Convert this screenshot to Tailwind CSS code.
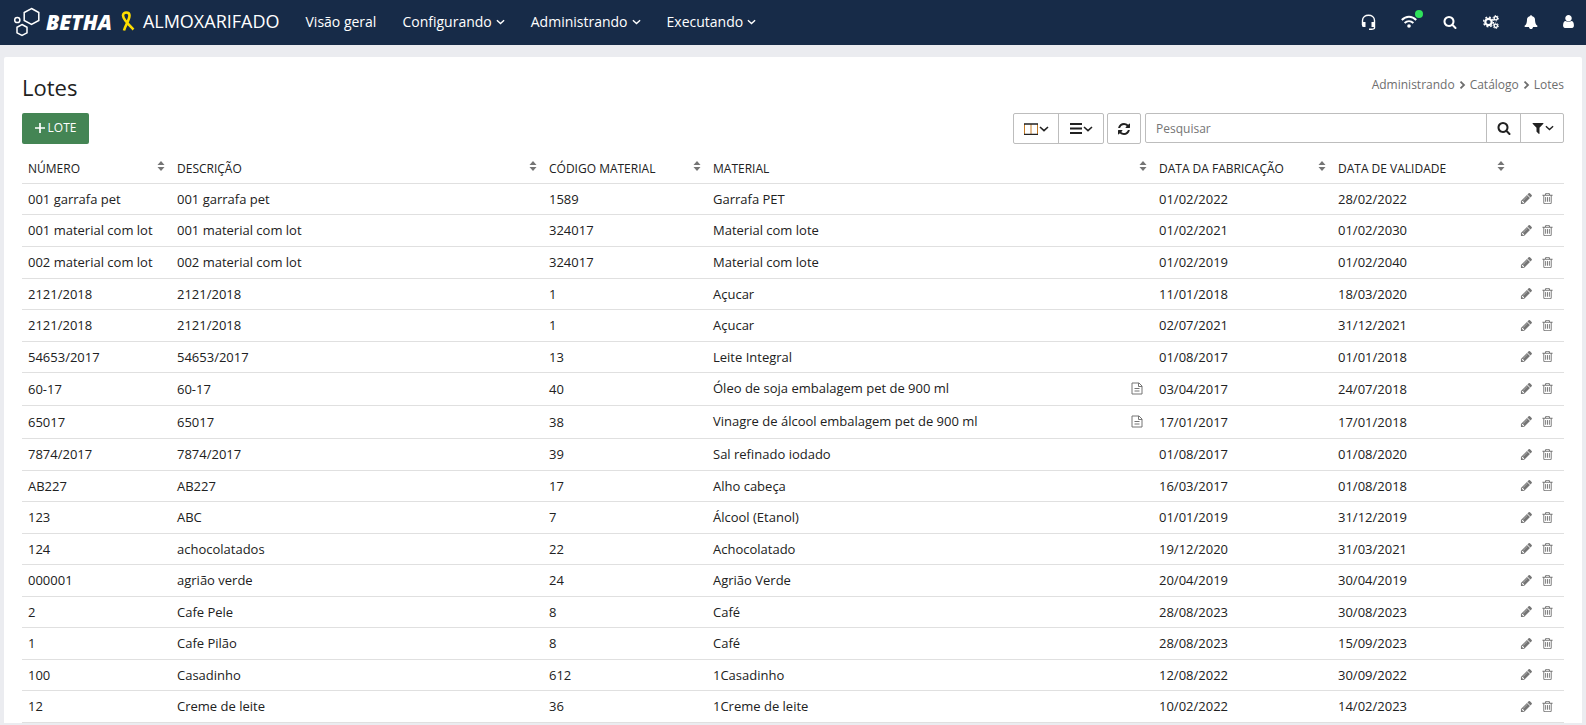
<!DOCTYPE html>
<html lang="pt-BR">
<head>
<meta charset="utf-8">
<meta name="viewport" content="width=device-width, initial-scale=1">
<title>Almoxarifado - Lotes</title>
<script src="https://cdn.jsdelivr.net/npm/@tailwindcss/browser@4"></script>
</head>
<body class="min-h-screen overflow-x-hidden bg-[#ebecf0] font-['Open_Sans',sans-serif] text-[13px] text-[#212121]">
<svg class="hidden" aria-hidden="true">
  <symbol id="search" viewBox="0 0 1792 1792"><path d="M1216 832q0-185-131.500-316.500t-316.500-131.500-316.500 131.500-131.500 316.500 131.500 316.500 316.500 131.500 316.500-131.500 131.500-316.500zm512 832q0 52-38 90t-90 38q-54 0-90-38l-343-342q-179 124-399 124-143 0-273.500-55.500t-225-150-150-225-55.500-273.500 55.500-273.500 150-225 225-150 273.500-55.500 273.500 55.500 225 150 150 225 55.500 273.500q0 220-124 399l343 343q37 37 37 90z"/></symbol>
  <symbol id="filter" viewBox="0 0 1792 1792"><path d="M1595 295q17 41-14 70l-493 493v742q0 42-39 59-13 5-25 5-27 0-45-19l-256-256q-19-19-19-45v-486l-493-493q-31-29-14-70 17-39 59-39h1280q42 0 59 39z"/></symbol>
  <symbol id="refresh" viewBox="0 0 1792 1792"><path d="M1639 1056q0 5-1 7-64 268-268 434.500t-478 166.500q-146 0-282.500-55t-243.500-157l-129 129q-19 19-45 19t-45-19-19-45v-448q0-26 19-45t45-19h448q26 0 45 19t19 45-19 45l-137 137q71 66 161 102t187 36q134 0 250-65t186-179q11-17 53-117 8-23 30-23h192q13 0 22.500 9.500t9.500 22.500zm25-800v448q0 26-19 45t-45 19h-448q-26 0-45-19t-19-45 19-45l138-138q-148-137-349-137-134 0-250 65t-186 179q-11 17-53 117-8 23-30 23h-199q-13 0-22.500-9.500t-9.500-22.500v-7q65-268 270-434.500t480-166.500q146 0 284 55.500t245 156.500l130-129q19-19 45-19t45 19 19 45z"/></symbol>
  <symbol id="pencil" viewBox="0 0 1792 1792"><path d="M491 1536l91-91-235-235-91 91v107h128v128h107zm523-928q0-22-22-22-10 0-17 7l-542 542q-7 7-7 17 0 22 22 22 10 0 17-7l542-542q7-7 7-17zm-54-192l416 416-832 832h-416v-416zm683 96q0 53-37 90l-166 166-416-416 166-165q36-38 90-38 53 0 91 38l235 234q37 39 37 91z"/></symbol>
  <symbol id="trash" viewBox="0 0 1792 1792"><path d="M704 736v576q0 14-9 23t-23 9h-64q-14 0-23-9t-9-23v-576q0-14 9-23t23-9h64q14 0 23 9t9 23zm256 0v576q0 14-9 23t-23 9h-64q-14 0-23-9t-9-23v-576q0-14 9-23t23-9h64q14 0 23 9t9 23zm256 0v576q0 14-9 23t-23 9h-64q-14 0-23-9t-9-23v-576q0-14 9-23t23-9h64q14 0 23 9t9 23zm128 724v-948h-896v948q0 22 7 40.500t14.500 27 10.500 8.500h832q3 0 10.500-8.500t14.500-27 7-40.500zm-672-1076h448l-48-117q-7-9-17-11h-317q-10 2-17 11zm928 32v64q0 14-9 23t-23 9h-96v948q0 83-47 143.500t-113 60.500h-832q-66 0-113-58.500t-47-141.500v-952h-96q-14 0-23-9t-9-23v-64q0-14 9-23t23-9h309l70-167q15-37 54-63t79-26h320q40 0 79 26t54 63l70 167h309q14 0 23 9t9 23z"/></symbol>
  <symbol id="bell" viewBox="0 0 1792 1792"><path d="M1728 1408q0 52-38 90t-90 38h-448q0 106-75 181t-181 75-181-75-75-181h-448q-52 0-90-38t-38-90q50-42 91-88t85-119.500 74.500-158.500 50-206 19.500-260q0-152 117-282.500t307-158.500q-8-19-8-39 0-40 28-68t68-28 68 28 28 68q0 20-8 39 190 28 307 158.500t117 282.500q0 139 19.500 260t50 206 74.500 158.500 85 119.500 91 88z"/></symbol>
  <symbol id="user" viewBox="256 128 1280 1536"><path d="M1536 1399q0 109-62.500 187t-150.500 78h-854q-88 0-150.500-78t-62.500-187q0-85 8.500-160.500t31.500-152 58.500-131 94-89 134.500-34.500q131 128 313 128t313-128q76 0 134.500 34.500t94 89 58.500 131 31.500 152 8.500 160.500zm-256-887q0 159-112.500 271.500t-271.500 112.500-271.500-112.500-112.500-271.500 112.500-271.500 271.500-112.500 271.500 112.500 112.500 271.500z"/></symbol>
  <symbol id="sort" viewBox="0 0 8 10"><path d="M4 0L7.500 4H.5zM4 10L.5 6h7z"/></symbol>
  <symbol id="down" viewBox="0 0 10 6"><path d="M1 1l4 3.600L9 1" fill="none" stroke="currentColor" stroke-width="1.600"/></symbol>
  <symbol id="doc" viewBox="0 0 12 13"><path d="M1 1h7l3 3v8H1zM7.500 1v3.500H11M3.500 6.500h5M3.500 9h5" fill="none" stroke="currentColor"/></symbol>
</svg>

<header class="flex h-[45px] items-center bg-[#172b48] pb-[2px] text-white">
  <a href="#" class="ml-3 flex items-center" aria-label="Betha Almoxarifado">
    <svg class="h-8 w-[30px]" viewBox="12 5 30 32" fill="none" stroke="#fff" stroke-width="1.500"><path d="M31.500 7.500l7.300 4v8l-7.300 4-7.300-4v-8z"/><path d="M22 23.500l5 2.800v5.500l-5 2.700-5-2.700v-5.500z"/><circle cx="17.300" cy="19" r="2.600"/></svg>
    <span class="ml-1 text-[21px] leading-6 font-extrabold italic">BETHA</span>
    <svg class="ml-[9px] h-[21px] w-[14px]" viewBox="0 0 14 21" fill="none" stroke="#ffdd00" stroke-width="2.600"><path d="M12.500 18.500C9 15 2 8.500 2 4.500 2 .5 8.500.5 8.500 4.500 8.500 9 4.500 14 3 19.500"/></svg>
  </a>
  <span class="ml-2 text-[18px] leading-6 pb-[2px]">ALMOXARIFADO</span>
  <nav class="ml-[26px] flex items-center gap-[26px] text-[14px]">
    <a href="#">Visão geral</a>
    <button type="button" class="flex items-center gap-1">Configurando<svg class="h-[6px] w-[9px]"><use href="#down"/></svg></button>
    <button type="button" class="flex items-center gap-1">Administrando<svg class="h-[6px] w-[9px]"><use href="#down"/></svg></button>
    <button type="button" class="flex items-center gap-1">Executando<svg class="h-[6px] w-[9px]"><use href="#down"/></svg></button>
  </nav>
  <div class="mr-3 ml-auto flex items-center gap-[25px]">
    <button type="button" aria-label="Suporte"><svg class="block h-4 w-[15px]" viewBox="0 0 15 16" fill="#fff"><path d="M1.500 11V6.500c0-7 12-7 12 0v7.500c0 1-1 1.300-5.500 1.300" fill="none" stroke="#fff" stroke-width="1.400"/><path d="M1 8h3.500v5H2.500Q1 13 1 11.500zM10.500 8H14v5h-3.500z"/></svg></button>
    <button type="button" class="relative" aria-label="Conexão"><svg class="block h-[13px] w-4" viewBox="0 0 16 13" fill="none" stroke="#fff" stroke-width="1.900"><path d="M.8 5C5 .7 11 .7 15.200 5M3.600 8c2.600-2.400 6.200-2.400 8.800 0"/><circle cx="8" cy="11" r="1.800" fill="#fff" stroke="none"/></svg><span class="absolute -top-[5px] -right-[6px] size-2 rounded-full bg-[#2fe35b]"></span></button>
    <button type="button" class="px-px" aria-label="Buscar"><svg class="block size-[14px] fill-white"><use href="#search"/></svg></button>
    <button type="button" aria-label="Configurações"><svg class="block h-[14px] w-4" viewBox="0 0 16 14" fill="none" stroke="#fff"><circle cx="5.500" cy="7" r="3.200" stroke-width="2.200"/><circle cx="5.500" cy="7" r="4.900" stroke-width="1.400" stroke-dasharray="1.920 1.920"/><circle cx="12.800" cy="3.200" r="1.700" stroke-width="1.400"/><circle cx="12.800" cy="3.200" r="2.700" stroke-width="1" stroke-dasharray="1.400 1.400"/><circle cx="12.800" cy="10.800" r="1.700" stroke-width="1.400"/><circle cx="12.800" cy="10.800" r="2.700" stroke-width="1" stroke-dasharray="1.400 1.400"/></svg></button>
    <button type="button" aria-label="Notificações"><svg class="block size-[14px] fill-white"><use href="#bell"/></svg></button>
    <button type="button" aria-label="Usuário"><svg class="block h-[13px] w-[11px] fill-white"><use href="#user"/></svg></button>
  </div>
</header>

<main class="mx-1 mt-3 rounded-t-xs bg-white px-[18px] pt-[14px]">
  <div class="flex h-[32px] items-start justify-between">
    <h1 class="text-[22px] leading-[32px]">Lotes</h1>
    <nav class="flex items-center gap-1 text-[12px] leading-7 text-[#6e6e6e]" aria-label="Trilha">
      <a href="#">Administrando</a>
      <svg class="h-2 w-[7px]" viewBox="0 0 7 8" fill="none" stroke="currentColor" stroke-width="1.800"><path d="M1.500.6L5 4 1.500 7.400"/></svg>
      <a href="#">Catálogo</a>
      <svg class="h-2 w-[7px]" viewBox="0 0 7 8" fill="none" stroke="currentColor" stroke-width="1.800"><path d="M1.500.6L5 4 1.500 7.400"/></svg>
      <a href="#">Lotes</a>
    </nav>
  </div>

  <div class="mt-[10px] flex items-start">
    <button type="button" class="flex h-[31px] w-[67px] items-center justify-center gap-[3px] rounded-xs bg-[#448554] pb-[2px] text-[12px] text-white"><svg class="size-[10px]" viewBox="0 0 10 10" stroke="#fff" stroke-width="1.700"><path d="M5 0v10M0 5h10"/></svg>LOTE</button>
    <div class="ml-auto flex h-[31px] divide-x divide-[#bdbdbd] rounded-xs border border-[#bdbdbd]">
      <button type="button" class="flex w-[45px] items-center justify-center gap-px" aria-label="Colunas"><svg class="h-3 w-[14px]" viewBox="0 0 14 12" fill="none" stroke-width="1"><path d="M.5 1v10.500h13V1M7 1v10" stroke="#c67b22"/><path d="M0 1h14M0 11.500h14" stroke="#212121" stroke-width="1.500"/></svg><svg class="h-[6px] w-[10px]"><use href="#down"/></svg></button>
      <button type="button" class="flex w-[44px] items-center justify-center gap-px" aria-label="Lista"><svg class="h-[11px] w-3" viewBox="0 0 12 11" stroke="#212121" stroke-width="2"><path d="M0 1h12M0 5.500h12M0 10h12"/></svg><svg class="h-[6px] w-[10px]"><use href="#down"/></svg></button>
    </div>
    <button type="button" class="ml-[3px] flex h-[31px] w-[34px] items-center justify-center rounded-xs border border-[#bdbdbd]" aria-label="Atualizar"><svg class="size-[14px] fill-[#212121]"><use href="#refresh"/></svg></button>
    <form class="ml-1 flex h-[30px] w-[419px] divide-x divide-[#bdbdbd] rounded-xs border border-[#bdbdbd]">
      <input type="text" placeholder="Pesquisar" aria-label="Pesquisar" class="min-w-0 flex-1 px-[10px] pt-[2px] text-[12px] outline-none placeholder:text-[#757575]">
      <button type="button" class="flex w-[34px] items-center justify-center" aria-label="Pesquisar"><svg class="size-[14px] fill-[#212121]"><use href="#search"/></svg></button>
      <button type="button" class="flex w-[42px] items-center justify-center" aria-label="Filtros"><svg class="size-[14px] fill-[#212121]"><use href="#filter"/></svg><svg class="h-[6px] w-[9px]"><use href="#down"/></svg></button>
    </form>
  </div>

  <table class="mt-2 w-full table-fixed border-collapse text-left leading-[18px]">
    <colgroup><col class="w-[149px]"><col class="w-[372px]"><col class="w-[164px]"><col><col class="w-[179px]"><col class="w-[179px]"><col class="w-[53px]"></colgroup>
    <thead>
      <tr id="heads" class="h-[31px] border-b border-[#e0e0e0] text-[12px]"></tr>
    </thead>
    <tbody id="rows"></tbody>
  </table>
</main>

<script>
const heads = ['NÚMERO', 'DESCRIÇÃO', 'CÓDIGO MATERIAL', 'MATERIAL', 'DATA DA FABRICAÇÃO', 'DATA DE VALIDADE'];
document.getElementById('heads').innerHTML = heads.map(h =>
  `<th class="px-[6px] pt-1 pb-0 font-medium"><button type="button" class="flex w-full items-center justify-between whitespace-nowrap">${h}<svg class="mb-[6px] h-[10px] w-2 fill-[#757575]"><use href="#sort"/></svg></button></th>`).join('') + '<td></td>';

const low = 'h-[31px]', mid = 'h-[32px]', tall = 'h-[33px]';
const lots = [
  [low, '001 garrafa pet', '001 garrafa pet', '1589', 'Garrafa PET', '01/02/2022', '28/02/2022'],
  [mid, '001 material com lot', '001 material com lot', '324017', 'Material com lote', '01/02/2021', '01/02/2030'],
  [mid, '002 material com lot', '002 material com lot', '324017', 'Material com lote', '01/02/2019', '01/02/2040'],
  [low, '2121/2018', '2121/2018', '1', 'Açucar', '11/01/2018', '18/03/2020'],
  [mid, '2121/2018', '2121/2018', '1', 'Açucar', '02/07/2021', '31/12/2021'],
  [low, '54653/2017', '54653/2017', '13', 'Leite Integral', '01/08/2017', '01/01/2018'],
  [tall, '60-17', '60-17', '40', 'Óleo de soja embalagem pet de 900 ml', '03/04/2017', '24/07/2018'],
  [tall, '65017', '65017', '38', 'Vinagre de álcool embalagem pet de 900 ml', '17/01/2017', '17/01/2018'],
  [mid, '7874/2017', '7874/2017', '39', 'Sal refinado iodado', '01/08/2017', '01/08/2020'],
  [low, 'AB227', 'AB227', '17', 'Alho cabeça', '16/03/2017', '01/08/2018'],
  [mid, '123', 'ABC', '7', 'Álcool (Etanol)', '01/01/2019', '31/12/2019'],
  [low, '124', 'achocolatados', '22', 'Achocolatado', '19/12/2020', '31/03/2021'],
  [mid, '000001', 'agrião verde', '24', 'Agrião Verde', '20/04/2019', '30/04/2019'],
  [low, '2', 'Cafe Pele', '8', 'Café', '28/08/2023', '30/08/2023'],
  [mid, '1', 'Cafe Pilão', '8', 'Café', '28/08/2023', '15/09/2023'],
  [low, '100', 'Casadinho', '612', '1Casadinho', '12/08/2022', '30/09/2022'],
  [mid, '12', 'Creme de leite', '36', '1Creme de leite', '10/02/2022', '14/02/2023'],
];
const note = '<button type="button" class="mr-[10px]" aria-label="Detalhes"><svg class="block h-[13px] w-3 text-[#757575]"><use href="#doc"/></svg></button>';
document.getElementById('rows').innerHTML = lots.map(([height, ...cells]) =>
  `<tr class="${height} border-b border-[#e0e0e0]">` + cells.map((c, i) =>
    `<td class="truncate py-0 pl-[6px]">${i === 3 && height === tall ? `<div class="flex items-center justify-between"><span class="pb-[2px]">${c}</span>${note}</div>` : c}</td>`).join('') +
    `<td class="py-0 pl-[9px]"><div class="flex items-center gap-2"><button type="button" aria-label="Editar"><svg class="block size-[13px] fill-[#757575]"><use href="#pencil"/></svg></button><button type="button" aria-label="Excluir"><svg class="block size-[13px] fill-[#757575]"><use href="#trash"/></svg></button></div></td></tr>`
).join('');
</script>
</body>
</html>
